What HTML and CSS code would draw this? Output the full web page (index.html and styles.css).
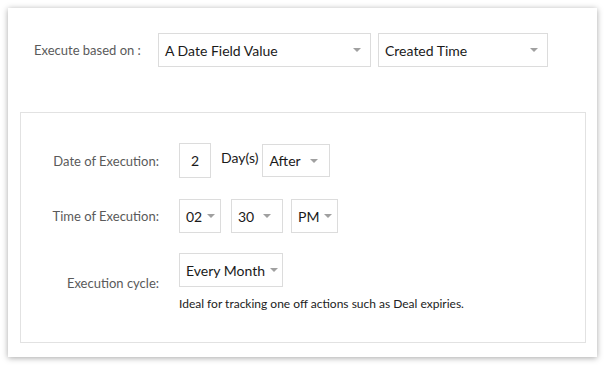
FILE: index.html
```html
<!DOCTYPE html>
<html lang="en">

<head>
    <meta charset="UTF-8">
    <title>Execution settings</title>
    <link rel="stylesheet" href="styles.css">
</head>

<body>
    <div class="card">
        <div class="top-row">
            <label class="top-label">Execute based on :</label>
            <div class="sel sel-field">A Date Field Value <span class="arrow"></span></div>
            <div class="sel sel-created">Created Time <span class="arrow"></span></div>
        </div>

        <div class="panel">
            <label class="lbl">Date of Execution:</label>
            <div class="ctrls">
                <div class="num">2</div>
                <span class="days">Day(s)</span>
                <div class="sel sel-after">After <span class="arrow"></span></div>
            </div>

            <label class="lbl">Time of Execution:</label>
            <div class="ctrls">
                <div class="sel sel-hour">02 <span class="arrow"></span></div>
                <div class="sel sel-min">30 <span class="arrow"></span></div>
                <div class="sel sel-ampm">PM <span class="arrow"></span></div>
            </div>

            <label class="lbl">Execution cycle:</label>
            <div class="cycle">
                <div class="sel sel-cycle">Every Month <span class="arrow"></span></div>
                <p class="hint">Ideal for tracking one off actions such as Deal expiries.</p>
            </div>
        </div>
    </div>
</body>

</html>
```

FILE: styles.css
```css
body {
    margin: 0;
    background: #fff;
    font-family: Lato, "Open Sans", sans-serif;
}

.card {
    width: 589px;
    height: 349px;
    box-sizing: border-box;
    margin: 8px;
    padding: 25px 11px 0 12px;
    background: #fff;
    box-shadow: 0 1px 6px rgba(0, 0, 0, 0.35);
}

.top-row {
    display: flex;
    align-items: center;
    padding-left: 14px;
}

.top-label {
    width: 124px;
    font-size: 13px;
    color: #5a5a5a;
}

.sel {
    display: flex;
    align-items: center;
    justify-content: space-between;
    gap: 5px;
    box-sizing: border-box;
    height: 34px;
    padding: 0 9px 0 6px;
    border: 1px solid #dcdcdc;
    background: #fff;
    font-size: 14px;
    color: #1a1a1a;
    white-space: nowrap;
}

.arrow {
    width: 0;
    height: 0;
    border-left: 4px solid transparent;
    border-right: 4px solid transparent;
    border-top: 4px solid #a0a0a0;
}

.sel-field {
    width: 213px;
}

.sel-created {
    width: 170px;
    margin-left: 7px;
}

.panel {
    display: grid;
    grid-template-columns: 138px auto;
    column-gap: 20px;
    row-gap: 21px;
    align-items: center;
    align-content: start;
    height: 231px;
    box-sizing: border-box;
    margin-top: 45px;
    padding-top: 30px;
    border: 1px solid #e2e2e2;
}

.lbl {
    text-align: right;
    font-size: 13px;
    color: #5a5a5a;
}

.ctrls {
    display: flex;
    align-items: center;
}

.num {
    width: 32px;
    height: 35px;
    box-sizing: border-box;
    border: 1px solid #dcdcdc;
    display: flex;
    align-items: center;
    justify-content: center;
    font-size: 14px;
    color: #1a1a1a;
}

.days {
    align-self: flex-start;
    margin: 6px 4px 0 10px;
    font-size: 14px;
    color: #1a1a1a;
}

.sel-after {
    width: 68px;
    height: 33px;
    padding-right: 11px;
}

.sel-hour {
    width: 42px;
}

.sel-min {
    width: 52px;
    margin-left: 10px;
    padding-right: 11px;
}

.sel-ampm {
    width: 47px;
    margin-left: 8px;
    padding-right: 8px;
}

.cycle {
    margin-top: -1px;
}

.sel-cycle {
    width: 104px;
    padding-right: 6px;
}

.hint {
    margin: 9px 0 0;
    font-size: 12px;
    color: #222;
}
```
